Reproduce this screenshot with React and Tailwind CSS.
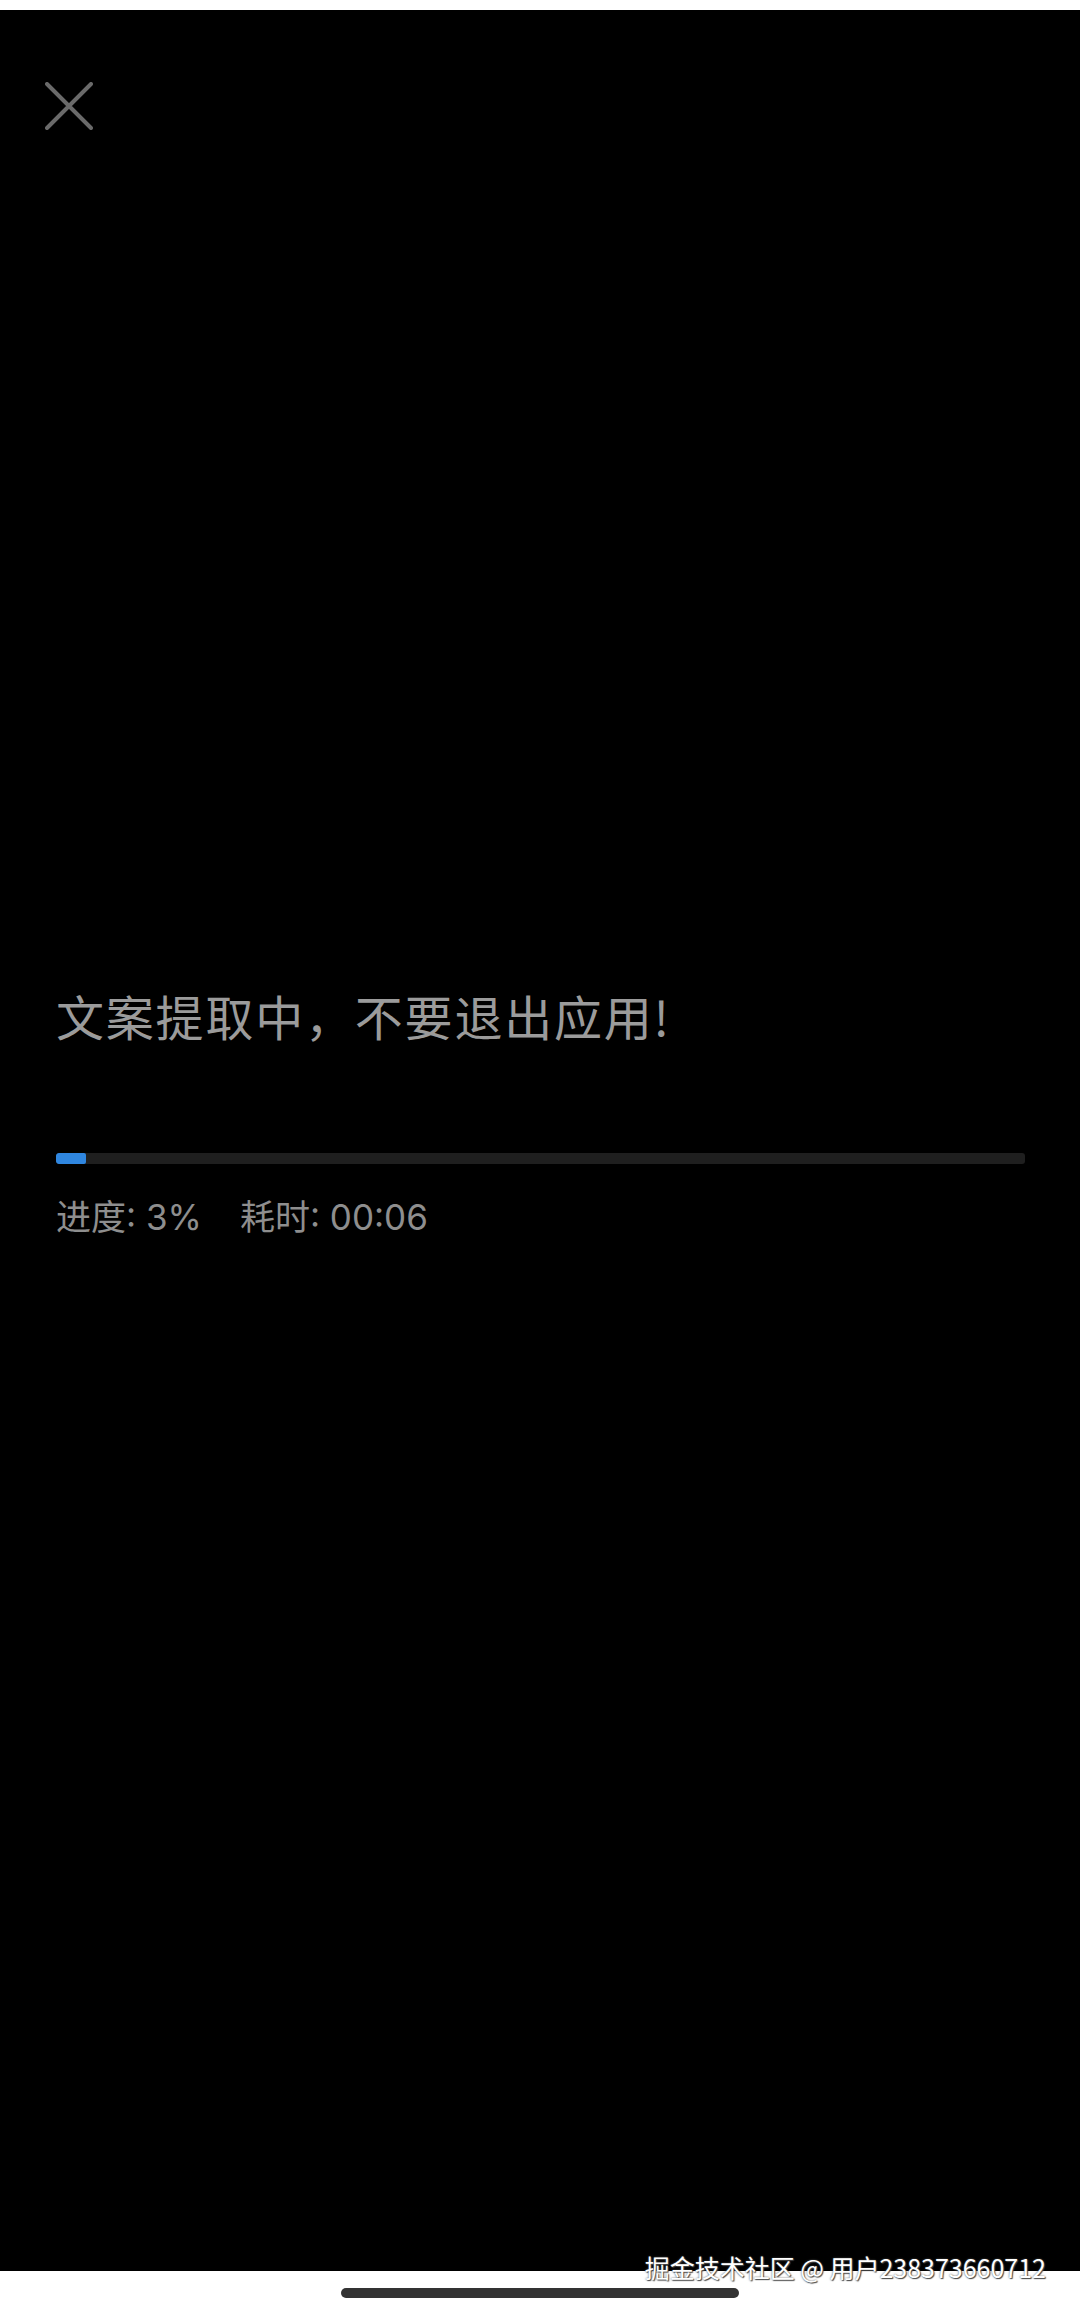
import React from "react";

const CloseIcon = () => (
  <svg width="48" height="48" viewBox="0 0 48 48" fill="none">
    <path d="M2 2L46 46M46 2L2 46" stroke="#6a6a6a" strokeWidth="4" strokeLinecap="round" />
  </svg>
);

export default function App() {
  const progress = 3;
  const font = { fontFamily: '"Noto Sans CJK SC", "Noto Sans", sans-serif' };
  const rowFont = { fontFamily: 'Inter, "Noto Sans CJK SC", sans-serif' };

  return (
    <div className="w-[1080px] h-[2315px] bg-white flex flex-col" style={font}>
      <div className="h-[10px] bg-white" />
      <div className="flex-1 bg-black flex flex-col">
        {/* Header */}
        <div className="pt-[72px] pl-[45px]">
          <CloseIcon />
        </div>

        <div className="px-[56px] mt-[861px]">
          <h1 className="text-[48px] leading-none text-[#9b9b9b] font-normal tracking-[1.8px]">
            文案提取中，不要退出应用!
          </h1>

          <div className="mt-[114px] h-[11px] w-[969px] bg-[#1f1f1f] rounded-[3px] overflow-hidden">
            <div className="h-full bg-[#2f86df] rounded-[2px]" style={{ width: "30px" }} />
          </div>

          <div className="mt-[36px] flex gap-[38px] text-[35px] leading-none text-[#8e8e8e]" style={rowFont}>
            <span>进度: {progress}%</span>
            <span>耗时: 00:06</span>
          </div>
        </div>
      </div>

      {/* Bottom bar */}
      <div className="relative h-[44px] bg-white flex justify-center">
        <div className="mt-[17px] w-[398px] h-[10px] rounded-full bg-[#333333]" />
        <div
          className="absolute right-[34px] top-[-16px] text-[25px] leading-none text-white whitespace-nowrap"
          style={{ textShadow: "0 0 2px #555, 1px 1px 1px #444" }}
        >
          掘金技术社区 @ 用户238373660712
        </div>
      </div>
    </div>
  );
}
